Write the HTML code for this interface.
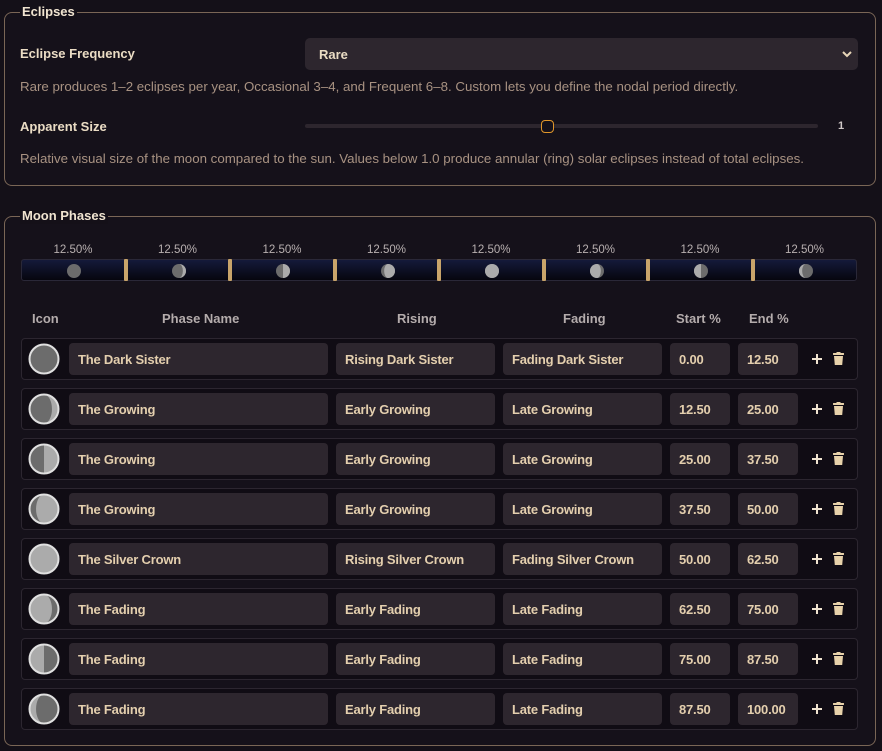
<!DOCTYPE html>
<html><head><meta charset="utf-8"><style>
*{box-sizing:border-box;margin:0;padding:0}
body{width:882px;height:751px;background:#141018;font-family:"Liberation Sans",sans-serif;color:#e8d6b8;position:relative;overflow:hidden}
.fs{position:absolute;border:1px solid #7a6656;border-radius:8px;background:#15111a}
.lg{position:absolute;background:#141018;color:#f0e4d0;font-weight:bold;font-size:13px;padding:0 2px;line-height:16px}
.lbl{position:absolute;font-weight:bold;font-size:13px;color:#eadcc4}
.desc{position:absolute;font-size:13.3px;color:#a89282;white-space:nowrap}
.sel{position:absolute;left:305px;top:38px;width:553px;height:32px;background:#2d262e;border-radius:5px;font-size:13px;padding:9px 14px;color:#eadcc4;font-weight:bold}
.inp{position:absolute;top:4px;height:32px;background:#2d262e;border-radius:4px;font-size:13px;font-weight:bold;color:#e4cfae;padding:9px 9px;white-space:nowrap;letter-spacing:-0.2px}
.row{position:absolute;left:21px;width:837px;height:42px;border:1px solid #2c2630;border-radius:4px;background:#100c14}
.hd{position:absolute;top:311px;font-size:13px;font-weight:bold;color:#b4acac}
.pct{position:absolute;top:244px;font-size:11.5px;color:#b8b0b0;width:104px;text-align:center}
</style></head><body>
<div class="fs" style="left:4px;top:12px;width:872px;height:174px"></div>
<div class="lg" style="left:20px;top:4px">Eclipses</div>
<div class="lbl" style="left:20px;top:46px">Eclipse Frequency</div>
<div class="sel">Rare<svg style="position:absolute;right:6px;top:12px" width="10" height="8" viewBox="0 0 10 8"><path d="M1 2 L5 6 L9 2" stroke="#e8d6b8" stroke-width="2" fill="none"/></svg></div>
<div class="desc" style="left:20px;top:79px">Rare produces 1–2 eclipses per year, Occasional 3–4, and Frequent 6–8. Custom lets you define the nodal period directly.</div>
<div class="lbl" style="left:20px;top:119px">Apparent Size</div>
<div style="position:absolute;left:305px;top:124px;width:513px;height:4px;background:#2d262e;border-radius:2px"></div>
<div style="position:absolute;left:541px;top:120px;width:13px;height:13px;border:1.5px solid #e0962a;border-radius:4px;background:#15111a"></div>
<div style="position:absolute;left:838px;top:120px;font-size:11px;color:#d0c8c8;font-weight:bold">1</div>
<div class="desc" style="left:20px;top:151px">Relative visual size of the moon compared to the sun. Values below 1.0 produce annular (ring) solar eclipses instead of total eclipses.</div>

<div class="fs" style="left:4px;top:216px;width:872px;height:530px"></div>
<div class="lg" style="left:20px;top:208px">Moon Phases</div>
<div id="strip" style="position:absolute;left:21px;top:259px;width:836px;height:22px;border-radius:3px;background:linear-gradient(#141a3a,#06060e);border:1px solid #2a2838"></div>
<div id="pcts"></div>
<div class="hd" style="left:32px">Icon</div>
<div class="hd" style="left:162px">Phase Name</div>
<div class="hd" style="left:397px">Rising</div>
<div class="hd" style="left:563px">Fading</div>
<div class="hd" style="left:676px">Start %</div>
<div class="hd" style="left:749px">End %</div>
<div id="rows"></div>
<script>
function moon(k,r,cx,cy,stroke){
 const d='#6c6c6c',l='#ababab';
 let s=`<circle cx="${cx}" cy="${cy}" r="${r}" fill="${d}"/>`;
 const T=`${cx},${cy-r}`,B=`${cx},${cy+r}`;
 const p=(side,rx,sw)=>`<path d="M${T} A${r},${r} 0 0 ${side} ${B} A${rx},${r} 0 0 ${sw} ${T}Z" fill="${l}"/>`;
 if(k==1)s+=p(1,r*0.55,0);
 if(k==2)s+=p(1,0.01,0);
 if(k==3)s+=p(1,r*0.55,1);
 if(k==4)s+=`<circle cx="${cx}" cy="${cy}" r="${r}" fill="${l}"/>`;
 if(k==5)s+=p(0,r*0.55,0);
 if(k==6)s+=p(0,0.01,0);
 if(k==7)s+=p(0,r*0.55,1);
 if(stroke)s+=`<circle cx="${cx}" cy="${cy}" r="${r}" fill="none" stroke="#e0e0e0" stroke-width="2"/>`;
 return s;
}
let st='',pc='';
for(let i=0;i<8;i++){
 const x=i*104.5;
 st+=`<svg style="position:absolute;left:${x+44}px;top:3px" width="16" height="16">${moon(i,7,8,8,false)}</svg>`;
 if(i>0)st+=`<div style="position:absolute;left:${x-3}px;top:-1px;width:4px;height:22px;background:#c8a46a;border-radius:1px"></div>`;
 pc+=`<div class="pct" style="left:${21+x}px">12.50%</div>`;
}
document.getElementById('strip').innerHTML=st;
document.getElementById('pcts').innerHTML=pc;
const data=[["The Dark Sister","Rising Dark Sister","Fading Dark Sister"],["The Growing","Early Growing","Late Growing"],["The Growing","Early Growing","Late Growing"],["The Growing","Early Growing","Late Growing"],["The Silver Crown","Rising Silver Crown","Fading Silver Crown"],["The Fading","Early Fading","Late Fading"],["The Fading","Early Fading","Late Fading"],["The Fading","Early Fading","Late Fading"]];
let h='';
data.forEach((d,i)=>{
 const a=(i*12.5).toFixed(2),b=((i+1)*12.5).toFixed(2);
 h+=`<div class="row" style="top:${338+i*50}px">
 <svg style="position:absolute;left:6px;top:4px" width="32" height="32">${moon(i,14.5,16,16,true)}</svg>
 <div class="inp" style="left:47px;width:259px">${d[0]}</div>
 <div class="inp" style="left:314px;width:159px">${d[1]}</div>
 <div class="inp" style="left:481px;width:159px">${d[2]}</div>
 <div class="inp" style="left:648px;width:60px">${a}</div>
 <div class="inp" style="left:716px;width:60px">${b}</div>
 <svg style="position:absolute;left:789px;top:14px" width="12" height="12"><path d="M6 1V11M1 6H11" stroke="#f0e4d0" stroke-width="2"/></svg>
 <svg style="position:absolute;left:811px;top:13px" width="11" height="13" viewBox="0 0 11 13"><rect x="0" y="1" width="11" height="2" rx="0.5" fill="#e8d2aa"/><rect x="3.5" y="0" width="4" height="2" fill="#e8d2aa"/><path d="M1 4H10L9.2 13H1.8Z" fill="#e8d2aa"/></svg>
 </div>`;
});
document.getElementById('rows').innerHTML=h;
</script>
</body></html>
